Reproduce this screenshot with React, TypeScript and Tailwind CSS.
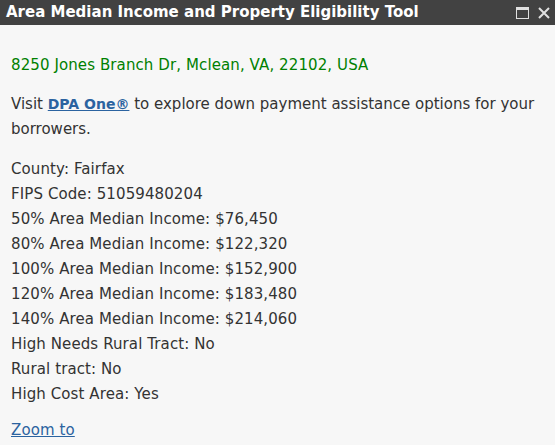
import React from 'react';

const rows: string[] = [
  'County: Fairfax',
  'FIPS Code: 51059480204',
  '50% Area Median Income: $76,450',
  '80% Area Median Income: $122,320',
  '100% Area Median Income: $152,900',
  '120% Area Median Income: $183,480',
  '140% Area Median Income: $214,060',
  'High Needs Rural Tract: No',
  'Rural tract: No',
  'High Cost Area: Yes',
];

export default function App() {
  return (
    <div className="w-[555px] h-[445px] bg-[#f7f7f7] flex flex-col overflow-hidden font-['Verdana','DejaVu_Sans',sans-serif] text-[15px] tracking-[0.1px] text-[#333]">
      <div className="h-[25px] bg-[#424242] flex items-center justify-between pl-[6px] pr-[4px] shrink-0">
        <span className="text-white font-bold text-[15px] tracking-normal">Area Median Income and Property Eligibility Tool</span>
        <div className="flex items-center gap-[8px]">
          <svg width="13" height="12" viewBox="0 0 13 12">
            <rect x="0.5" y="0.5" width="12" height="11" fill="none" stroke="#e0e0e0" strokeWidth="1" />
            <rect x="0.5" y="0.5" width="12" height="2.5" fill="#e0e0e0" />
          </svg>
          <svg width="14" height="14" viewBox="0 0 14 14">
            <path d="M2 2 L12 12 M12 2 L2 12" stroke="#e0e0e0" strokeWidth="2" />
          </svg>
        </div>
      </div>
      <div className="pl-[11px] pr-[4px] pt-[28px] leading-[25px]">
        <div className="text-[#008000]">8250 Jones Branch Dr, Mclean, VA, 22102, USA</div>
        <p className="mt-[14px] tracking-normal">
          Visit{' '}
          <a href="#" className="font-bold text-[14px] text-[#2b63a0] underline">DPA One®</a>{' '}
          to explore down payment assistance options for your borrowers.
        </p>
        <div className="mt-[15px]">
          {rows.map((r) => (
            <div key={r}>{r}</div>
          ))}
        </div>
        <a href="#" className="block mt-[11px] text-[#2b63a0] underline">Zoom to</a>
      </div>
    </div>
  );
}
